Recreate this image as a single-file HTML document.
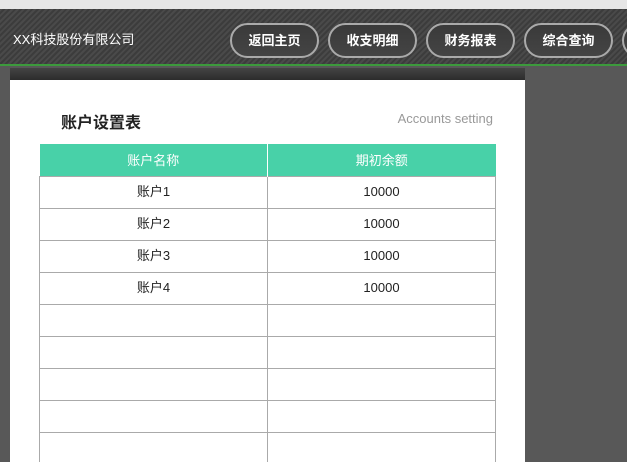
<!DOCTYPE html>
<html><head><meta charset="utf-8"><style>
*{margin:0;padding:0;box-sizing:border-box}
html,body{width:627px;height:462px;overflow:hidden}
body{background:#585858;font-family:"Liberation Sans","Noto Sans CJK SC",sans-serif;position:relative}
.top{position:absolute;left:0;top:0;width:627px;height:9px;background:#e6e6e6}
.hdr{position:absolute;left:0;top:9px;width:627px;height:57px;background:repeating-linear-gradient(135deg,#4a4a4a 0 2px,#3c3c3c 2px 4px);border-bottom:2px solid #3c9a3c}
.logo{position:absolute;left:13px;top:20px;color:#fff;font-size:13px}
.btn{position:absolute;top:14px;width:89px;height:35px;border-radius:18px;border:2px solid #aaa;background:linear-gradient(#3a3a3a,#444);color:#fff;font-size:13px;font-weight:bold;text-align:center;line-height:31px}
.bar{position:absolute;left:10px;top:68px;width:515px;height:12px;background:linear-gradient(#444,#2c2c2c)}
.card{position:absolute;left:10px;top:80px;width:515px;height:382px;background:#fff;overflow:hidden}
.title{position:absolute;left:51px;top:29px;font-size:16px;font-weight:bold;color:#222}
.sub{position:absolute;right:32px;top:31px;font-size:13px;color:#999}
table{position:absolute;left:29px;top:64px;width:457px;border-collapse:collapse;font-size:13px;color:#222}
th{background:#48d1a8;color:#fff;font-weight:normal;height:32px;border-right:1px solid #fff;padding:0}
th:last-child{border-right:none}
td{height:32px;border:1px solid #aaa;text-align:center;padding:0;line-height:30px}
</style></head><body>
<div class="top"></div>
<div class="hdr">
<div class="logo">XX科技股份有限公司</div>
<div class="btn" style="left:230px">返回主页</div>
<div class="btn" style="left:328px">收支明细</div>
<div class="btn" style="left:426px">财务报表</div>
<div class="btn" style="left:524px">综合查询</div>
<div class="btn" style="left:622px"></div>
</div>
<div class="bar"></div>
<div class="card">
<div class="title">账户设置表</div>
<div class="sub">Accounts setting</div>
<table>
<tr><th style="width:228px">账户名称</th><th>期初余额</th></tr>
<tr><td>账户1</td><td>10000</td></tr>
<tr><td>账户2</td><td>10000</td></tr>
<tr><td>账户3</td><td>10000</td></tr>
<tr><td>账户4</td><td>10000</td></tr>
<tr><td></td><td></td></tr>
<tr><td></td><td></td></tr>
<tr><td></td><td></td></tr>
<tr><td></td><td></td></tr>
<tr><td></td><td></td></tr>
</table>
</div>
</body></html>
